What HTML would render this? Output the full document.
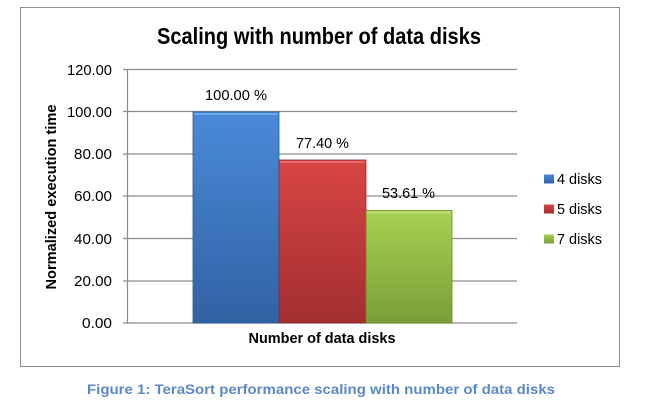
<!DOCTYPE html>
<html><head><style>html,body{margin:0;padding:0;background:#fff;}svg{display:block}</style></head>
<body>
<svg width="654" height="402" viewBox="0 0 654 402" xmlns="http://www.w3.org/2000/svg" font-family="Liberation Sans, sans-serif">
<defs>
<linearGradient id="gb" x1="0" y1="0" x2="0" y2="1"><stop offset="0" stop-color="#4a8ad9"/><stop offset="1" stop-color="#3162a3"/></linearGradient>
<linearGradient id="gr" x1="0" y1="0" x2="0" y2="1"><stop offset="0" stop-color="#d94545"/><stop offset="1" stop-color="#a22f2f"/></linearGradient>
<linearGradient id="gg" x1="0" y1="0" x2="0" y2="1"><stop offset="0" stop-color="#a8d152"/><stop offset="1" stop-color="#7b9d37"/></linearGradient>
</defs>
<rect x="20.5" y="7.5" width="599" height="359" fill="#fff" stroke="#8c8c8c" stroke-width="1"/>
<text x="319" y="44" font-size="23" font-weight="bold" text-anchor="middle" textLength="324" lengthAdjust="spacingAndGlyphs" fill="#000">Scaling with number of data disks</text>
<g stroke="#8c8c8c" stroke-width="1.2">
<line x1="123" y1="69.5" x2="517" y2="69.5"/>
<line x1="123" y1="111.5" x2="517" y2="111.5"/>
<line x1="123" y1="154" x2="517" y2="154"/>
<line x1="123" y1="196" x2="517" y2="196"/>
<line x1="123" y1="238.5" x2="517" y2="238.5"/>
<line x1="123" y1="281" x2="517" y2="281"/>
<line x1="123" y1="323" x2="517" y2="323"/>
<line x1="127.5" y1="69.5" x2="127.5" y2="323"/>
</g>
<g font-size="15" text-anchor="end" fill="#000">
<text x="112" y="75" textLength="45" lengthAdjust="spacingAndGlyphs">120.00</text>
<text x="112" y="117" textLength="45" lengthAdjust="spacingAndGlyphs">100.00</text>
<text x="112" y="159" textLength="38" lengthAdjust="spacingAndGlyphs">80.00</text>
<text x="112" y="201" textLength="38" lengthAdjust="spacingAndGlyphs">60.00</text>
<text x="112" y="244" textLength="38" lengthAdjust="spacingAndGlyphs">40.00</text>
<text x="112" y="286" textLength="38" lengthAdjust="spacingAndGlyphs">20.00</text>
<text x="112" y="328" textLength="30" lengthAdjust="spacingAndGlyphs">0.00</text>
</g>
<text transform="translate(56,197) rotate(-90)" font-size="15" font-weight="bold" text-anchor="middle" textLength="185" lengthAdjust="spacingAndGlyphs">Normalized execution time</text>
<rect x="193" y="112" width="86" height="211" fill="url(#gb)" stroke="#2d5a94" stroke-width="0.8"/>
<rect x="279" y="160" width="87" height="163" fill="url(#gr)" stroke="#8f2a2a" stroke-width="0.8"/>
<rect x="366" y="210.5" width="86" height="112.5" fill="url(#gg)" stroke="#6d8b31" stroke-width="0.8"/>
<rect x="194" y="113" width="84" height="2" fill="#6aa6ea"/>
<rect x="280" y="161" width="85" height="2" fill="#e66a6a"/>
<rect x="367" y="211.5" width="84" height="2" fill="#bfe070"/>
<g font-size="15" fill="#000">
<text x="205" y="100" textLength="62" lengthAdjust="spacingAndGlyphs">100.00 %</text>
<text x="296" y="148" textLength="53" lengthAdjust="spacingAndGlyphs">77.40 %</text>
<text x="382" y="198" textLength="53" lengthAdjust="spacingAndGlyphs">53.61 %</text>
</g>
<text x="322" y="343" font-size="15" font-weight="bold" text-anchor="middle" textLength="147" lengthAdjust="spacingAndGlyphs">Number of data disks</text>
<rect x="544" y="174.5" width="10" height="9" fill="url(#gb)"/>
<rect x="544" y="204.5" width="10" height="9" fill="url(#gr)"/>
<rect x="544" y="234.5" width="10" height="9" fill="url(#gg)"/>
<g font-size="15" fill="#000">
<text x="557" y="184" textLength="45" lengthAdjust="spacingAndGlyphs">4 disks</text>
<text x="557" y="214" textLength="45" lengthAdjust="spacingAndGlyphs">5 disks</text>
<text x="557" y="244" textLength="45" lengthAdjust="spacingAndGlyphs">7 disks</text>
</g>
<text x="321" y="394" font-size="14" font-weight="bold" fill="#5b88c8" text-anchor="middle" textLength="468" lengthAdjust="spacingAndGlyphs">Figure 1: TeraSort performance scaling with number of data disks</text>
</svg>
</body></html>
